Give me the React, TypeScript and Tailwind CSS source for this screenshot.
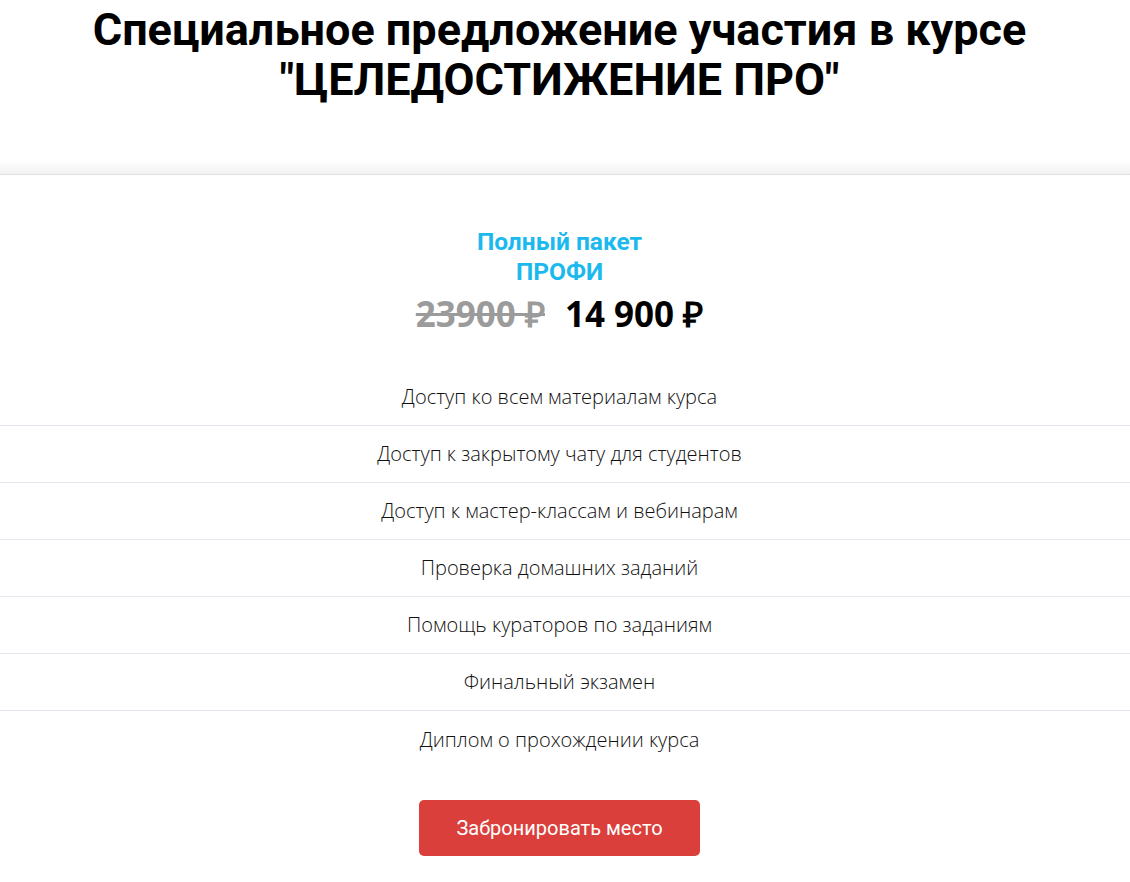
export default function App() {
  const features = [
    'Доступ ко всем материалам курса',
    'Доступ к закрытому чату для студентов',
    'Доступ к мастер-классам и вебинарам',
    'Проверка домашних заданий',
    'Помощь кураторов по заданиям',
    'Финальный экзамен',
    'Диплом о прохождении курса',
  ]

  return (
    <main className="min-h-screen bg-white">
      <h1 className="text-center font-['Roboto',sans-serif] font-bold text-[45px] leading-[50px] text-black pt-[5px] pr-[11px]">
        Специальное предложение участия в курсе<br />"ЦЕЛЕДОСТИЖЕНИЕ ПРО"
      </h1>

      <div className="mt-[54px] h-[16px] bg-gradient-to-b from-white to-[#f2f2f2] border-b border-[#e1e1e1]" />

      <section className="pt-[52px]">
        <div className="text-center font-['Roboto',sans-serif] font-bold text-[24.5px] leading-[30px] text-[#1cb9ee] pr-[11px]">
          Полный пакет<br />ПРОФИ
        </div>
        <div className="flex justify-center items-baseline gap-[20px] mt-[5px] pr-[11px] font-['Open_Sans',sans-serif] font-bold text-[35px] leading-[44px]">
          <span className="text-[#9b9b9b] line-through">23900 ₽</span>
          <span className="text-black">14 900 ₽</span>
        </div>

        <ul className="mt-[33px]">
          {features.map((f, i) => (
            <li key={f}
              className={'h-[57px] flex items-center justify-center pr-[11px] font-[\'Open_Sans\',sans-serif] font-light text-[20px] text-[#111] ' + (i < features.length - 1 ? 'border-b border-[#e3e7ee]' : '')}>
              {f}
            </li>
          ))}
        </ul>

        <div className="flex justify-center mt-[32px] pr-[11px] pb-8">
          <button className="w-[281px] h-[56px] bg-[#db3f3b] rounded-[5px] text-white font-['Roboto',sans-serif] text-[20px]">
            Забронировать место
          </button>
        </div>
      </section>
    </main>
  )
}
